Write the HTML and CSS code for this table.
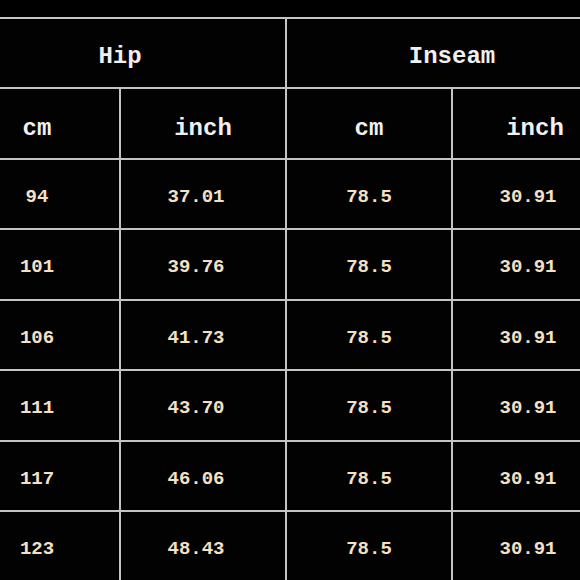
FILE: index.html
```html
<!DOCTYPE html>
<html>
<head>
<meta charset="utf-8">
<link rel="stylesheet" href="styles.css">
</head>
<body>
<div class="page">
  <div class="caption"></div>
  <div class="chart">
    <div class="cell head group span2">Hip</div>
    <div class="cell head group span2">Inseam</div>
    <div class="cell head unit">cm</div>
    <div class="cell head unit">inch</div>
    <div class="cell head unit">cm</div>
    <div class="cell head unit">inch</div>

    <div class="cell num">94</div><div class="cell num dec">37.01</div><div class="cell num">78.5</div><div class="cell num dec">30.91</div>
    <div class="cell num">101</div><div class="cell num dec">39.76</div><div class="cell num">78.5</div><div class="cell num dec">30.91</div>
    <div class="cell num">106</div><div class="cell num dec">41.73</div><div class="cell num">78.5</div><div class="cell num dec">30.91</div>
    <div class="cell num">111</div><div class="cell num dec">43.70</div><div class="cell num">78.5</div><div class="cell num dec">30.91</div>
    <div class="cell num">117</div><div class="cell num dec">46.06</div><div class="cell num">78.5</div><div class="cell num dec">30.91</div>
    <div class="cell num">123</div><div class="cell num dec">48.43</div><div class="cell num">78.5</div><div class="cell num dec">30.91</div>
  </div>
</div>
</body>
</html>
```

FILE: styles.css
```css
html, body {
  margin: 0;
  padding: 0;
  background: #000;
  overflow: hidden;
}
.page {
  width: 580px;
  height: 580px;
  overflow: hidden;
  background: #000;
}
.caption {
  height: 17px;
}
.chart {
  margin-left: -47px;
  display: grid;
  grid-template-columns: repeat(4, 164px);
  grid-auto-rows: 68.43px;
  gap: 2px;
  padding: 2px;
  width: max-content;
  background: #c4c4c4;
}
.cell {
  background: #020202;
  display: flex;
  align-items: center;
  justify-content: center;
  box-sizing: border-box;
  font-family: "Liberation Mono", "DejaVu Sans Mono", monospace;
  font-weight: bold;
}
.span2 {
  grid-column: span 2;
}
.head {
  color: #f0f0f0;
  font-size: 24px;
}
.group {
  padding-top: 6px;
}
.unit {
  padding-top: 10px;
}
.num {
  color: #f4e0c6;
  font-size: 19px;
  padding-top: 6px;
}
.dec {
  padding-right: 14px;
}
```
